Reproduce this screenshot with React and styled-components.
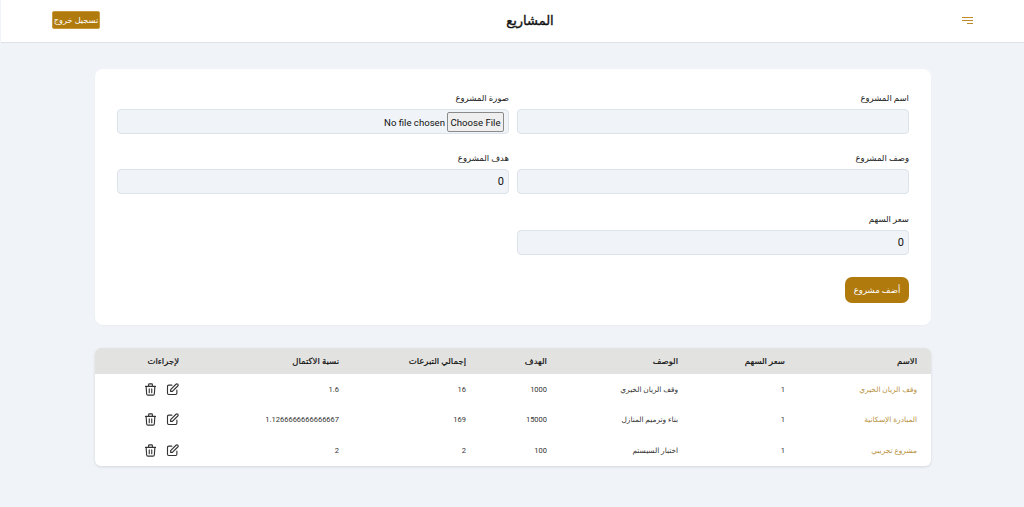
import React from 'react';
import styled, { createGlobalStyle } from 'styled-components';
import { HiOutlineTrash, HiOutlinePencilAlt } from 'react-icons/hi';

const Global = createGlobalStyle`
  html, body { margin: 0; padding: 0; background: #f0f4f9; }
  body { font-family: Roboto, "DejaVu Sans", sans-serif; color: #111; }
  * { box-sizing: border-box; }
`;
const Page = styled.div`
  direction: rtl;
  min-height: 507px;
  background: #f0f4f9;
`;
const Header = styled.header`
  height: 43px;
  margin-left: 1px;
  padding: 0 51px 2px 51px;
  background: #fff;
  border-bottom: 1px solid #dde1e7;
  display: flex;
  align-items: center;
  justify-content: space-between;
`;
const MenuButton = styled.span`
  display: flex;
  width: 11px;
  color: #c08a2a;
`;
const Title = styled.h1`
  margin: 0 2px 0 0;
  font-size: 13px;
  font-weight: 400;
  -webkit-text-stroke: .35px #111;
  color: #111;
`;
const Logout = styled.button`
  width: 48px;
  height: 18px;
  padding: 0;
  border: 1px solid #c89a3e;
  border-radius: 2px;
  background: #b07a0c;
  color: #fff;
  white-space: nowrap;
  font: 400 8.2px Roboto, "DejaVu Sans", sans-serif;
`;
const Main = styled.main`
  padding: 26px 93px 0 95px;
`;
const Card = styled.section`
  height: 256px;
  padding: 22px 22px 0;
  background: #fff;
  border-radius: 8px;
  box-shadow: 0 1px 2px rgba(0,0,0,.03);
`;
const FormGrid = styled.div`
  display: grid;
  grid-template-columns: 392px 392px;
  column-gap: 8px;
  row-gap: 9.4px;
`;
const Field = styled.label`
  display: flex;
  flex-direction: column;
  height: 51px;
  font-size: 8.5px;
  color: #222;
`;
const LabelText = styled.span`
  height: 18px;
  line-height: 14px;
`;
const inputStyles = `
  width: 100%;
  height: 25px;
  border: 1px solid #dde3eb;
  border-radius: 4px;
  background: #f0f4f9;
  color: #111;
`;
const TextInput = styled.input`
  ${inputStyles}
  padding: 0 4px;
  font: 400 11px Roboto, sans-serif;
  text-align: right;
`;
const FileBox = styled.div`
  ${inputStyles}
  padding: 1px 4px 0;
  display: flex;
  align-items: center;
  gap: 2px;
  font: 400 9.6px Roboto, sans-serif;
`;
const FileButton = styled.span`
  height: 20px;
  width: 57px;
  display: flex;
  align-items: center;
  justify-content: center;
  border: 1px solid #8a8a8a;
  border-radius: 2px;
  background: #efefef;
`;
const SubmitRow = styled.div`
  margin-top: 14.2px;
  display: flex;
`;
const Submit = styled.button`
  width: 64px;
  height: 26px;
  padding: 0;
  border: 0;
  border-radius: 7px;
  background: #b07a0c;
  color: #fff;
  font: 400 8.5px Roboto, "DejaVu Sans", sans-serif;
`;
const TableCard = styled.section`
  margin-top: 23px;
  border-radius: 6px;
  overflow: hidden;
  background: #fff;
  box-shadow: 0 1px 3px rgba(0,0,0,.12);
`;
const Table = styled.table`
  width: 836px;
  table-layout: fixed;
  border-collapse: collapse;
`;
const Th = styled.th`
  height: 26px;
  padding: 0 14px 1px;
  background: #e2e2e0;
  font-size: 8.5px;
  font-weight: 400;
  -webkit-text-stroke: .2px #111;
  text-align: right;
  color: #111;
`;
const Td = styled.td`
  height: 30.67px;
  padding: 0 14px;
  font-size: ${p => (p.$arabic ? '7.4px' : '7.5px')};
  text-align: right;
  color: ${p => (p.$name ? '#b8923f' : '#333')};
`;
const Actions = styled.div`
  display: flex;
  gap: 7px;
  align-items: center;
  margin-right: -0.5px;
`;
const Icon = styled.span`
  display: flex;
  color: #333;
`;

const cols = [132, 107, 131, 81, 127, 160, 98];
const heads = ['الاسم', 'سعر السهم', 'الوصف', 'الهدف', 'إجمالي التبرعات', 'نسبة الاكتمال', 'لإجراءات'];
const rows = [
  ['وقف الريان الخيري', '1', 'وقف الريان الخيري', '1000', '16', '1.6'],
  ['المبادرة الإسكانية', '1', 'بناء وترميم المنازل', '15000', '169', '1.1266666666666667'],
  ['مشروع تجريبي', '1', 'اختبار السيستم', '100', '2', '2'],
];

export default function App() {
  return (
    <Page>
      <Global />
      <Header>
        <MenuButton>
          <svg width="11" height="7" viewBox="0 0 11 7" fill="none" stroke="currentColor" strokeWidth="1">
            <path d="M0 .5h11M0 3.5h11M5 6.5h6" />
          </svg>
        </MenuButton>
        <Title>المشاريع</Title>
        <Logout>تسجيل خروج</Logout>
      </Header>
      <Main>
        <Card>
          <FormGrid>
            <Field><LabelText>اسم المشروع</LabelText><TextInput /></Field>
            <Field>
              <LabelText>صورة المشروع</LabelText>
              <FileBox><FileButton>Choose File</FileButton><span>No file chosen</span></FileBox>
            </Field>
            <Field><LabelText>وصف المشروع</LabelText><TextInput /></Field>
            <Field><LabelText>هدف المشروع</LabelText><TextInput defaultValue="0" /></Field>
            <Field><LabelText>سعر السهم</LabelText><TextInput defaultValue="0" /></Field>
          </FormGrid>
          <SubmitRow><Submit>أضف مشروع</Submit></SubmitRow>
        </Card>
        <TableCard>
          <Table>
            <colgroup>{cols.map((w, i) => <col key={i} style={{ width: w }} />)}</colgroup>
            <thead><tr>{heads.map(h => <Th key={h}>{h}</Th>)}</tr></thead>
            <tbody>
              {rows.map((r, i) => (
                <tr key={i}>
                  {r.map((c, j) => <Td key={j} $name={j === 0} $arabic={j === 0 || j === 2}>{c}</Td>)}
                  <Td>
                    <Actions>
                      <Icon><HiOutlinePencilAlt size={15} strokeWidth={1.8} /></Icon>
                      <Icon><HiOutlineTrash size={15} strokeWidth={1.8} /></Icon>
                    </Actions>
                  </Td>
                </tr>
              ))}
            </tbody>
          </Table>
        </TableCard>
      </Main>
    </Page>
  );
}
